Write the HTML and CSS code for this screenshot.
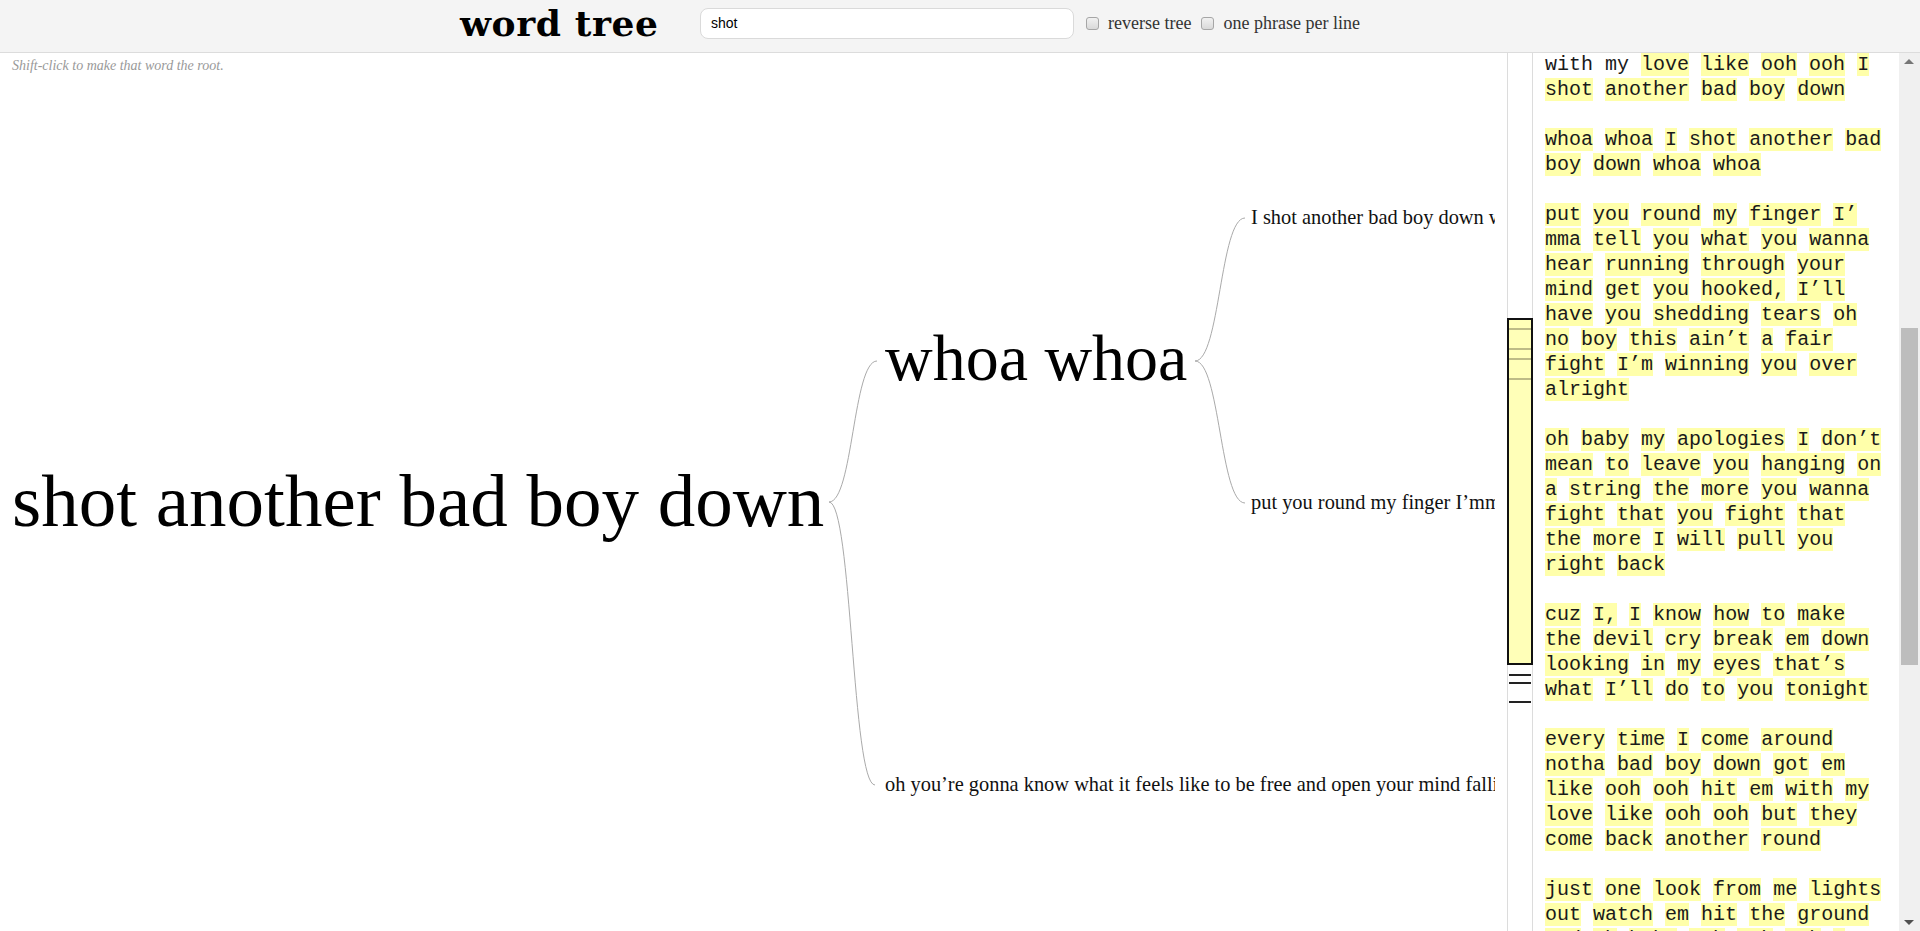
FILE: index.html
```html
<!DOCTYPE html>
<html lang="en">
<head>
<meta charset="utf-8">
<title>word tree</title>
<link rel="stylesheet" href="styles.css">
</head>
<body>
<header class="topbar">
  <div class="topbar-inner">
    <h1 class="title">word tree</h1>
    <input class="search" type="text" value="shot">
    <label class="opt"><input type="checkbox" class="cb">reverse tree</label>
    <label class="opt"><input type="checkbox" class="cb">one phrase per line</label>
  </div>
</header>
<main class="main">
  <section class="tree">
    <p class="hint">Shift-click to make that word the root.</p>
    <svg class="tree-svg" width="1495" height="878" viewBox="0 53 1495 878" xmlns="http://www.w3.org/2000/svg">
      <g class="links">
        <path d="M829,502 C853,502 853,361 877,361"/>
        <path d="M829,502 C852,502 852,785 875,785"/>
        <path d="M1195,361 C1220,361 1220,218 1245,218"/>
        <path d="M1195,361 C1220,361 1220,503 1245,503"/>
      </g>
      <text class="node n-root" x="12" y="526">shot another bad boy down</text>
      <text class="node n-mid" x="885" y="380">whoa whoa</text>
      <text class="node n-leaf" x="1251" y="224">I shot another bad boy down wh</text>
      <text class="node n-leaf" x="1251" y="509">put you round my finger I’mma</text>
      <text class="node n-leaf" x="885" y="791">oh you’re gonna know what it feels like to be free and open your mind fallin</text>
    </svg>
  </section>
  <div class="minimap">
    <div class="mm-view">
      <span class="mm-line" style="top:8px"></span>
      <span class="mm-line" style="top:28px"></span>
      <span class="mm-line" style="top:38px"></span>
      <span class="mm-line" style="top:58px"></span>
    </div>
    <span class="mm-mark" style="top:621px"></span>
    <span class="mm-mark" style="top:629px"></span>
    <span class="mm-mark" style="top:648px"></span>
  </div>
  <section class="lyrics">
    <div class="ln">with my <span class="hl">love</span> <span class="hl">like</span> <span class="hl">ooh</span> <span class="hl">ooh</span> <span class="hl">I</span></div>
    <div class="ln"><span class="hl">shot</span> <span class="hl">another</span> <span class="hl">bad</span> <span class="hl">boy</span> <span class="hl">down</span></div>
    <div class="ln"></div>
    <div class="ln"><span class="hl">whoa</span> <span class="hl">whoa</span> <span class="hl">I</span> <span class="hl">shot</span> <span class="hl">another</span> <span class="hl">bad</span></div>
    <div class="ln"><span class="hl">boy</span> <span class="hl">down</span> <span class="hl">whoa</span> <span class="hl">whoa</span></div>
    <div class="ln"></div>
    <div class="ln"><span class="hl">put</span> <span class="hl">you</span> <span class="hl">round</span> <span class="hl">my</span> <span class="hl">finger</span> <span class="hl">I’</span></div>
    <div class="ln"><span class="hl">mma</span> <span class="hl">tell</span> <span class="hl">you</span> <span class="hl">what</span> <span class="hl">you</span> <span class="hl">wanna</span></div>
    <div class="ln"><span class="hl">hear</span> <span class="hl">running</span> <span class="hl">through</span> <span class="hl">your</span></div>
    <div class="ln"><span class="hl">mind</span> <span class="hl">get</span> <span class="hl">you</span> <span class="hl">hooked,</span> <span class="hl">I’ll</span></div>
    <div class="ln"><span class="hl">have</span> <span class="hl">you</span> <span class="hl">shedding</span> <span class="hl">tears</span> <span class="hl">oh</span></div>
    <div class="ln"><span class="hl">no</span> <span class="hl">boy</span> <span class="hl">this</span> <span class="hl">ain’t</span> <span class="hl">a</span> <span class="hl">fair</span></div>
    <div class="ln"><span class="hl">fight</span> <span class="hl">I’m</span> <span class="hl">winning</span> <span class="hl">you</span> <span class="hl">over</span></div>
    <div class="ln"><span class="hl">alright</span></div>
    <div class="ln"></div>
    <div class="ln"><span class="hl">oh</span> <span class="hl">baby</span> <span class="hl">my</span> <span class="hl">apologies</span> <span class="hl">I</span> <span class="hl">don’t</span></div>
    <div class="ln"><span class="hl">mean</span> <span class="hl">to</span> <span class="hl">leave</span> <span class="hl">you</span> <span class="hl">hanging</span> <span class="hl">on</span></div>
    <div class="ln"><span class="hl">a</span> <span class="hl">string</span> <span class="hl">the</span> <span class="hl">more</span> <span class="hl">you</span> <span class="hl">wanna</span></div>
    <div class="ln"><span class="hl">fight</span> <span class="hl">that</span> <span class="hl">you</span> <span class="hl">fight</span> <span class="hl">that</span></div>
    <div class="ln"><span class="hl">the</span> <span class="hl">more</span> <span class="hl">I</span> <span class="hl">will</span> <span class="hl">pull</span> <span class="hl">you</span></div>
    <div class="ln"><span class="hl">right</span> <span class="hl">back</span></div>
    <div class="ln"></div>
    <div class="ln"><span class="hl">cuz</span> <span class="hl">I,</span> <span class="hl">I</span> <span class="hl">know</span> <span class="hl">how</span> <span class="hl">to</span> <span class="hl">make</span></div>
    <div class="ln"><span class="hl">the</span> <span class="hl">devil</span> <span class="hl">cry</span> <span class="hl">break</span> <span class="hl">em</span> <span class="hl">down</span></div>
    <div class="ln"><span class="hl">looking</span> <span class="hl">in</span> <span class="hl">my</span> <span class="hl">eyes</span> <span class="hl">that’s</span></div>
    <div class="ln"><span class="hl">what</span> <span class="hl">I’ll</span> <span class="hl">do</span> <span class="hl">to</span> <span class="hl">you</span> <span class="hl">tonight</span></div>
    <div class="ln"></div>
    <div class="ln"><span class="hl">every</span> <span class="hl">time</span> <span class="hl">I</span> <span class="hl">come</span> <span class="hl">around</span></div>
    <div class="ln"><span class="hl">notha</span> <span class="hl">bad</span> <span class="hl">boy</span> <span class="hl">down</span> <span class="hl">got</span> <span class="hl">em</span></div>
    <div class="ln"><span class="hl">like</span> <span class="hl">ooh</span> <span class="hl">ooh</span> <span class="hl">hit</span> <span class="hl">em</span> <span class="hl">with</span> <span class="hl">my</span></div>
    <div class="ln"><span class="hl">love</span> <span class="hl">like</span> <span class="hl">ooh</span> <span class="hl">ooh</span> <span class="hl">but</span> <span class="hl">they</span></div>
    <div class="ln"><span class="hl">come</span> <span class="hl">back</span> <span class="hl">another</span> <span class="hl">round</span></div>
    <div class="ln"></div>
    <div class="ln"><span class="hl">just</span> <span class="hl">one</span> <span class="hl">look</span> <span class="hl">from</span> <span class="hl">me</span> <span class="hl">lights</span></div>
    <div class="ln"><span class="hl">out</span> <span class="hl">watch</span> <span class="hl">em</span> <span class="hl">hit</span> <span class="hl">the</span> <span class="hl">ground</span></div>
    <div class="ln"><span class="hl">and</span> <span class="hl">oh</span> <span class="hl">baby</span> <span class="hl">ooh</span> <span class="hl">ooh</span> <span class="hl">ooh</span> <span class="hl">I</span></div>
  </section>
  <div class="scrollbar">
    <div class="sb-btn"><span class="arrow-up"></span></div>
    <div class="sb-track"><div class="sb-thumb"></div></div>
    <div class="sb-btn"><span class="arrow-down"></span></div>
  </div>
</main>
</body>
</html>
```

FILE: styles.css
```css
* { box-sizing: border-box; }
html, body { margin: 0; padding: 0; }
body {
  width: 1920px;
  height: 931px;
  overflow: hidden;
  background: #fff;
  font-family: "Liberation Serif", "Times New Roman", serif;
  color: #000;
}

/* ---------- header ---------- */
.topbar {
  height: 53px;
  background: #f4f4f4;
  border-bottom: 1px solid #dcdcdc;
}
.topbar-inner {
  width: 1000px;
  margin: 0 auto;
  height: 46px;
  display: flex;
  align-items: center;
}
.title {
  margin: 0;
  width: 240px;
  font-family: "DejaVu Serif", Georgia, serif;
  font-weight: bold;
  font-size: 36px;
  line-height: 36px;
  letter-spacing: 0.6px;
  color: #000;
}
.search {
  width: 374px;
  height: 31px;
  margin: 0;
  padding: 0 10px;
  border: 1px solid #dadada;
  border-radius: 8px;
  background: #fff;
  font-family: "Liberation Sans", Arial, sans-serif;
  font-size: 14px;
  color: #000;
  outline: none;
}
.opt {
  display: flex;
  align-items: center;
  margin-left: 12px;
  font-family: "Liberation Serif", Georgia, serif;
  font-size: 18px;
  color: #333;
}
.opt + .opt { margin-left: 10px; }
.cb {
  -webkit-appearance: none;
  appearance: none;
  width: 13px;
  height: 13px;
  margin: 0 9px 0 0;
  border: 1px solid #a6a6a6;
  border-radius: 3px;
  background: linear-gradient(#f1f1f1, #d9d9d9);
}

/* ---------- main ---------- */
.main {
  display: flex;
  height: 878px;
}
.tree {
  position: relative;
  width: 1495px;
  flex: none;
  overflow: hidden;
}
.hint {
  margin: 0;
  padding: 5px 12px 3px;
  font-style: italic;
  font-size: 14px;
  line-height: 16px;
  color: #999;
}
.tree-svg {
  position: absolute;
  left: 0;
  top: 0;
}
.links path {
  fill: none;
  stroke: #aaa;
  stroke-width: 1;
}
.node {
  font-family: "Liberation Serif", "Times New Roman", serif;
  fill: #000;
}
.n-root { font-size: 75px; }
.n-mid { font-size: 66px; }
.n-leaf { font-size: 20.4px; fill: #111; }

/* ---------- minimap ---------- */
.minimap {
  position: relative;
  flex: none;
  width: 26px;
  margin-left: 12px;
  border-left: 1px solid #dcdcdc;
  border-right: 1px solid #dcdcdc;
}
.mm-view {
  position: absolute;
  left: -1px;
  top: 265px;
  width: 26px;
  height: 347px;
  background: #ffffb8;
  border: 2px solid #111;
}
.mm-line {
  position: absolute;
  left: 0;
  right: 0;
  height: 2px;
  background: #bdbb86;
}
.mm-mark {
  position: absolute;
  left: 1px;
  right: 1px;
  height: 2px;
  background: #222;
}

/* ---------- lyrics ---------- */
.lyrics {
  flex: none;
  width: 366px;
  padding: 0 0 0 12px;
  margin-top: -1px;
  overflow: hidden;
  font-family: "Liberation Mono", "Courier New", monospace;
  font-size: 20px;
  line-height: 25px;
  color: #1a1a1a;
}
.ln {
  height: 25px;
  white-space: pre;
}
.hl { background: #ffffaa; }

/* ---------- scrollbar ---------- */
.scrollbar {
  flex: none;
  width: 21px;
  display: flex;
  flex-direction: column;
  background: #f0f0f0;
}
.sb-btn {
  height: 17px;
  display: flex;
  align-items: center;
  justify-content: center;
}
.arrow-up {
  width: 0;
  height: 0;
  border-left: 5px solid transparent;
  border-right: 5px solid transparent;
  border-bottom: 5px solid #767676;
  margin-left: -2px;
}
.arrow-down {
  width: 0;
  height: 0;
  border-left: 5px solid transparent;
  border-right: 5px solid transparent;
  border-top: 5px solid #505050;
  margin-left: -2px;
}
.sb-track { flex: 1; }
.sb-thumb {
  width: 17px;
  height: 337px;
  margin: 258px 0 0 2px;
  background: #bdbdbd;
}
```
